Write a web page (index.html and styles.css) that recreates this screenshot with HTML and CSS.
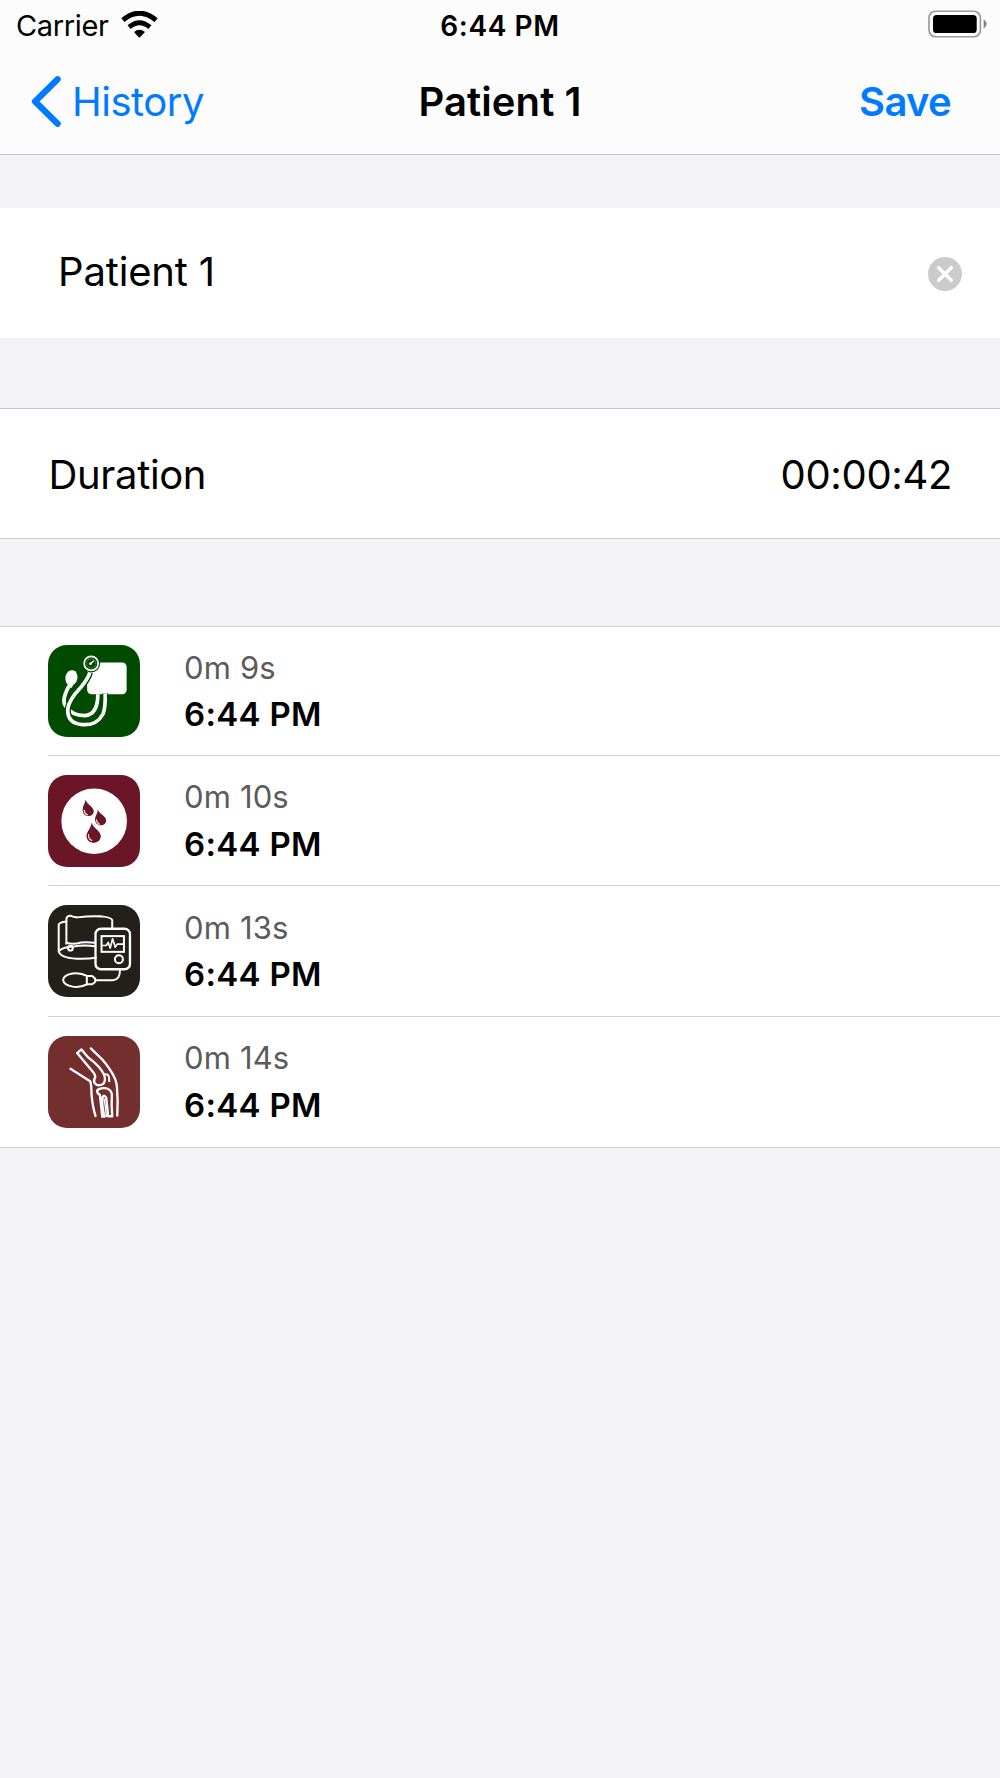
FILE: index.html
```
<!DOCTYPE html>
<html lang="en">
<head>
    <meta charset="UTF-8">
    <meta name="viewport" content="width=device-width, initial-scale=1.0">
    <title>Patient 1</title>
    <link rel="stylesheet" href="styles.css">
</head>
<body>
    <header class="header">
        <div class="status-bar">
            <div class="carrier">
                <span>Carrier</span>
                <svg class="wifi" viewBox="360 30 111 82">
                    <path d="M365 58 Q415 15 466 58" fill="none" stroke="#000" stroke-width="15"/>
                    <path d="M384 79 Q415 52 447 79" fill="none" stroke="#000" stroke-width="15"/>
                    <path d="M399 94 Q415 80 432 94 L418 109 Q415 112 412 109 Z"/>
                </svg>
            </div>
            <span class="clock">6:44 PM</span>
            <div class="battery">
                <svg viewBox="444 31 178 83">
                    <rect x="447" y="34" width="155" height="77" rx="20" fill="#fff" stroke="#999" stroke-width="5"/>
                    <rect x="459" y="45" width="132" height="55" rx="11"/>
                    <path d="M612 58 Q621 64 621 72 Q621 80 612 87 Z" fill="#808080"/>
                </svg>
            </div>
        </div>
        <nav class="nav-bar">
            <a class="back-button" href="#">
                <svg viewBox="92 229 90 154">
                    <path d="M172 239 L104 306 L172 373" fill="none" stroke="#007aff" stroke-width="19" stroke-linecap="round" stroke-linejoin="round"/>
                </svg>
                <span>History</span>
            </a>
            <h1>Patient 1</h1>
            <a class="save-button" href="#">Save</a>
        </nav>
    </header>

    <main>
        <div class="name-field">
            <span class="name-value">Patient 1</span>
            <svg class="clear-button" viewBox="0 0 34 34">
                <circle cx="17" cy="17" r="17" fill="#cbcbcb"/>
                <path d="M10.7 10.7 L23.3 23.3 M23.3 10.7 L10.7 23.3" stroke="#fff" stroke-width="3.5" stroke-linecap="round"/>
            </svg>
        </div>

        <div class="duration-row">
            <span class="duration-label">Duration</span>
            <span class="duration-value">00:00:42</span>
        </div>

        <ul class="events">
            <li class="event">
                <!-- manual blood pressure -->
                <svg class="event-icon green" viewBox="25 27 275 275">
                    <rect x="142" y="79" width="118" height="95" rx="13" fill="#fff"/>
                    <g fill="none" stroke="#fff" stroke-width="8" stroke-linecap="butt">
                        <path d="M87 151 Q64 194 78 210 Q96 238 135 238 Q174 235 174 174" stroke-width="11"/>
                        <path d="M150 109 Q146 126 122 155 Q88 191 84 218 Q82 262 128 265 Q171 268 189 234 Q197 217 196 172" stroke="#004b00" stroke-width="19"/>
                        <path d="M150 109 Q146 126 122 155 Q88 191 84 218 Q82 262 128 265 Q171 268 189 234 Q197 217 196 172" stroke-width="11"/>
                    </g>
                    <ellipse cx="95" cy="125" rx="18" ry="23" transform="rotate(12 95 125)" fill="#fff"/>
                    <path d="M84 143 H102 L96 155 H82 Z" fill="#fff"/>
                    <circle cx="154" cy="82" r="27" fill="#004b00"/>
                    <circle cx="154" cy="82" r="21" fill="none" stroke="#fff" stroke-width="5"/>
                    <circle cx="154" cy="82" r="14" fill="none" stroke="#fff" stroke-width="2" stroke-dasharray="2 3"/>
                    <path d="M151 84 L162 74" stroke="#fff" stroke-width="4"/>
                    <circle cx="152" cy="83" r="4" fill="#fff"/>
                </svg>
                <div class="event-text">
                    <span class="elapsed">0m 9s</span>
                    <span class="time">6:44 PM</span>
                </div>
            </li>
            <li class="event">
                <!-- bleeding -->
                <svg class="event-icon maroon" viewBox="25 27 275 275">
                    <circle cx="163" cy="165" r="98" fill="#fff"/>
                    <g fill="#6a1628">
                        <path d="M137 101 C135 115 127 122 129 135 C132 154 160 155 162 136 C162 122 143 117 137 101 Z"/>
                        <path d="M174 131 C173 144 164 151 166 163 C168 181 197 183 199 164 C199 149 181 146 174 131 Z"/>
                        <path d="M155 169 C154 187 140 196 140 210 C142 236 181 236 183 210 C181 191 160 187 155 169 Z"/>
                    </g>
                    <g fill="none" stroke="#fff" stroke-width="3" stroke-linecap="round">
                        <path d="M133 132 Q134 143 143 146"/>
                        <path d="M170 161 Q170 171 179 174"/>
                        <path d="M146 205 Q145 218 156 223"/>
                    </g>
                </svg>
                <div class="event-text">
                    <span class="elapsed">0m 10s</span>
                    <span class="time">6:44 PM</span>
                </div>
            </li>
            <li class="event">
                <!-- automatic blood pressure -->
                <svg class="event-icon black" viewBox="25 29 275 275">
                    <g fill="none" stroke="#fff" stroke-width="6" stroke-linejoin="round" stroke-linecap="round">
                        <path d="M80 78 Q58 80 57 88 V168 Q64 190 126 190 Q150 190 168 187"/>
                        <path d="M80 145 V69 Q83 61 92 61 Q100 66 113 66 Q150 61 185 63 Q215 66 217 74 V99"/>
                        <path d="M80 142 Q100 148 124 141 Q147 140 165 142"/>
                        <path d="M58 166 Q71 154 101 153 Q132 148 165 152"/>
                        <circle cx="92" cy="158" r="7"/>
                        <rect x="167" y="100" width="103" height="121" rx="16" stroke-width="7"/>
                        <rect x="185" y="122" width="67" height="47" stroke-linejoin="miter"/>
                        <path d="M189 150 H199 L205 141 L211 158 L218 130 L226 155 L232 146 H248" stroke-width="5"/>
                        <circle cx="237" cy="191" r="12"/>
                        <path d="M141 241 C118 228 74 231 70 253 C74 276 118 279 141 266 Z"/>
                        <path d="M141 241 H157 L166 249 V259 L157 266 H141"/>
                        <path d="M167 254 H219 Q241 252 240 223"/>
                    </g>
                </svg>
                <div class="event-text">
                    <span class="elapsed">0m 13s</span>
                    <span class="time">6:44 PM</span>
                </div>
            </li>
            <li class="event">
                <!-- knee joint -->
                <svg class="event-icon brick" viewBox="25 30 275 275">
                    <g fill="none" stroke="#fff" stroke-width="7" stroke-linecap="round" stroke-linejoin="round">
                        <path d="M153 67 L188 101 Q230 151 231 182 Q235 224 232 268"/>
                        <path d="M92 128 L151 165 Q155 176 155 204 Q158 241 167 269"/>
                        <path d="M112 81 L125 70 L145 94 Q181 121 193 146 Q200 167 187 175 Q172 181 164 170 Q160 163 166 154 Q167 144 154 131 Z"/>
                        <path d="M198 144 Q209 144 208 165" stroke-width="6"/>
                        <path d="M187 270 Q183 230 180 206 Q171 201 172 193 Q178 185 195 186 Q213 188 216 204 Q214 240 217 270 H205 L199 214 Q193 204 188 213 Q185 239 194 271 H187"/>
                        <path d="M193 218 L200 270 H194" stroke-width="4"/>
                    </g>
                </svg>
                <div class="event-text">
                    <span class="elapsed">0m 14s</span>
                    <span class="time">6:44 PM</span>
                </div>
            </li>
        </ul>
    </main>
</body>
</html>
```
FILE: styles.css
```
* {
    margin: 0;
    padding: 0;
    box-sizing: border-box;
}

body {
    font-family: Inter, "Liberation Sans", sans-serif;
    font-size: 40px;
    background-color: #f2f2f7;
    color: #000;
    min-height: 100vh;
}

svg {
    display: block;
}

a {
    color: #007aff;
    text-decoration: none;
}

.header {
    height: 155px;
    background-color: #fcfcfd;
    border-bottom: 1px solid #cacace;
}

.status-bar,
.nav-bar {
    display: grid;
    grid-template-columns: 1fr auto 1fr;
    align-items: center;
}

.status-bar {
    height: 50px;
    padding: 0 13px 0 16px;
    font-size: 29px;
    letter-spacing: -0.35px;
}

.carrier {
    display: flex;
    align-items: center;
    gap: 12px;
}

.wifi {
    width: 37px;
    height: 27px;
    margin-top: -2px;
}

.clock {
    font-weight: 600;
    font-size: 28px;
    letter-spacing: 0.6px;
    padding-top: 1px;
    margin-right: 3px;
}

.battery {
    justify-self: end;
}

.battery svg {
    width: 59px;
    height: 28px;
    margin-top: -2px;
}

.nav-bar {
    height: 103px;
    padding: 0 49px 0 31px;
}

.nav-bar h1 {
    font-size: 40px;
    font-weight: 600;
    letter-spacing: 0.1px;
    /* evens out the unequal side padding */
    margin-left: 18px;
}

.back-button {
    display: flex;
    align-items: center;
    gap: 11px;
    letter-spacing: -0.5px;
}

.back-button svg {
    width: 30px;
    height: 51px;
}

.save-button {
    justify-self: end;
    font-weight: 600;
    letter-spacing: -0.7px;
}

.name-field {
    display: flex;
    align-items: center;
    justify-content: space-between;
    height: 130px;
    margin-top: 53px;
    padding: 0 38px 0 58px;
    background-color: #fff;
}

.name-value {
    padding-bottom: 3px;
    letter-spacing: -0.15px;
}

.clear-button {
    width: 34px;
    height: 34px;
    margin-top: 1px;
}

.duration-row {
    display: flex;
    align-items: center;
    justify-content: space-between;
    height: 131px;
    margin-top: 70px;
    padding: 1px 48px 0 48.5px;
    background-color: #fff;
    border-top: 1px solid #c9c9cc;
    border-bottom: 1px solid #c9c9cc;
    letter-spacing: -0.35px;
}

.events {
    list-style: none;
    margin-top: 87px;
    padding-left: 48px;
    background-color: #fff;
    border-top: 1px solid #d0d0d3;
    border-bottom: 1px solid #d0d0d3;
}

.event {
    display: flex;
    align-items: center;
    gap: 44px;
    height: 130.4px;
    border-bottom: 1px solid #d2d2d4;
}

.event:first-child {
    height: 129px;
}

.event:last-child {
    height: 130px;
    border-bottom: none;
}

.event-icon {
    width: 92px;
    height: 92px;
    border-radius: 19px;
}

.green {
    background-color: #004b00;
}

.maroon {
    background-color: #6a1628;
}

.black {
    background-color: #231f1a;
}

.brick {
    background-color: #722f2e;
}

.event-text {
    display: flex;
    flex-direction: column;
    line-height: 46.5px;
}

.elapsed {
    font-size: 31px;
    letter-spacing: 0.15px;
    color: #5b5b5b;
}

.time {
    font-size: 33px;
    font-weight: 600;
    letter-spacing: 0.3px;
}
```
